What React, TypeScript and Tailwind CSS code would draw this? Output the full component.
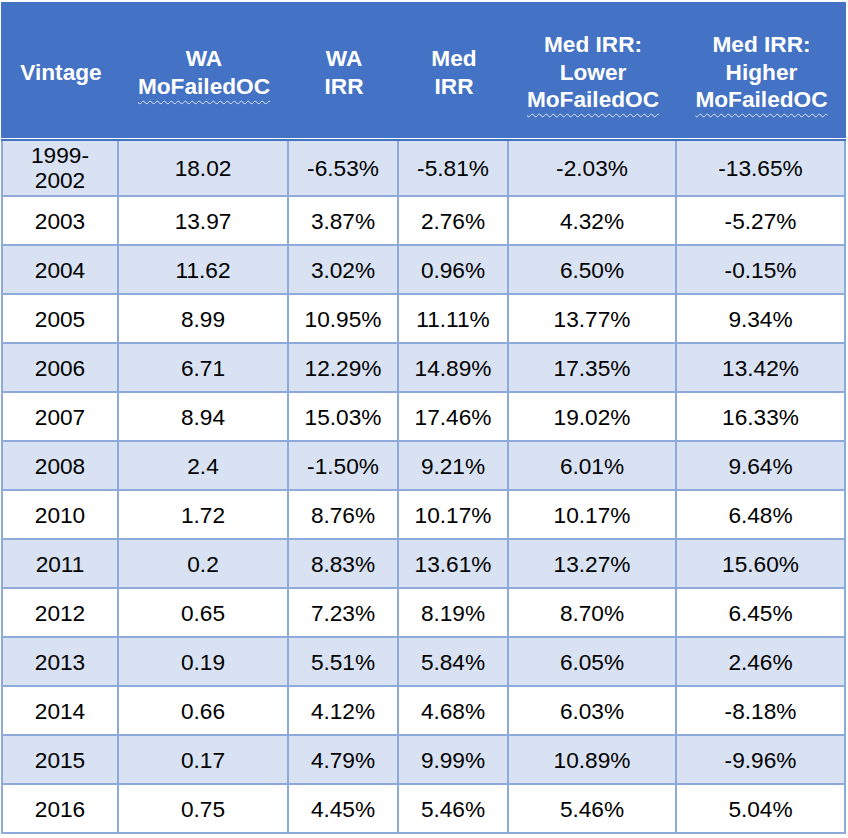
import React from "react";

const rows: string[][] = [
  ["1999-\n2002", "18.02", "-6.53%", "-5.81%", "-2.03%", "-13.65%"],
  ["2003", "13.97", "3.87%", "2.76%", "4.32%", "-5.27%"],
  ["2004", "11.62", "3.02%", "0.96%", "6.50%", "-0.15%"],
  ["2005", "8.99", "10.95%", "11.11%", "13.77%", "9.34%"],
  ["2006", "6.71", "12.29%", "14.89%", "17.35%", "13.42%"],
  ["2007", "8.94", "15.03%", "17.46%", "19.02%", "16.33%"],
  ["2008", "2.4", "-1.50%", "9.21%", "6.01%", "9.64%"],
  ["2010", "1.72", "8.76%", "10.17%", "10.17%", "6.48%"],
  ["2011", "0.2", "8.83%", "13.61%", "13.27%", "15.60%"],
  ["2012", "0.65", "7.23%", "8.19%", "8.70%", "6.45%"],
  ["2013", "0.19", "5.51%", "5.84%", "6.05%", "2.46%"],
  ["2014", "0.66", "4.12%", "4.68%", "6.03%", "-8.18%"],
  ["2015", "0.17", "4.79%", "9.99%", "10.89%", "-9.96%"],
  ["2016", "0.75", "4.45%", "5.46%", "5.46%", "5.04%"],
];

const widths = ["w-[116px]", "w-[170px]", "w-[110px]", "w-[110px]", "w-[168px]", "w-[169px]"];

const Sq = ({ children }: { children: React.ReactNode }) => (
  <span className="underline decoration-wavy decoration-[#dde5f5] decoration-1 underline-offset-[6px]">
    {children}
  </span>
);

const headers: React.ReactNode[] = [
  <>Vintage</>,
  <>
    WA
    <br />
    <Sq>MoFailedOC</Sq>
  </>,
  <>
    WA
    <br />
    IRR
  </>,
  <>
    Med
    <br />
    IRR
  </>,
  <>
    Med IRR:
    <br />
    Lower
    <br />
    <Sq>MoFailedOC</Sq>
  </>,
  <>
    Med IRR:
    <br />
    Higher
    <br />
    <Sq>MoFailedOC</Sq>
  </>,
];

export default function App() {
  return (
    <div
      className="w-[848px] h-[838px] bg-white pt-[2px] pl-[1px]"
      style={{ fontFamily: '"Liberation Sans", Arial, sans-serif' }}
    >
      <div className="w-[845px]">
        <div className="flex h-[136px] bg-[#4472C4] pl-[2px] pt-[5px]">
          {headers.map((h, i) => (
            <div
              key={i}
              className={`${widths[i]} flex items-center justify-center text-center text-white font-bold text-[22.67px] leading-[27.5px]`}
            >
              <div>{h}</div>
            </div>
          ))}
        </div>
        <div className="h-[1px] bg-white" />
        <div className="h-[2px] bg-[#4472C4]" />
        <div className="border-l-2 border-[#8EAADB]">
          {rows.map((r, ri) => (
            <div
              key={ri}
              className={`flex ${ri === 0 ? "h-[56px]" : "h-[49px]"} ${
                ri % 2 === 0 ? "bg-[#D9E2F3]" : "bg-white"
              }`}
            >
              {r.map((c, ci) => (
                <div
                  key={ci}
                  className={`${widths[ci]} flex items-center justify-center text-center border-r-2 border-b-2 border-[#8EAADB] text-black text-[22.67px] leading-[25px] whitespace-pre-line ${
                    ri === 0 ? "" : "pt-[2px]"
                  }`}
                >
                  {c}
                </div>
              ))}
            </div>
          ))}
        </div>
      </div>
    </div>
  );
}
